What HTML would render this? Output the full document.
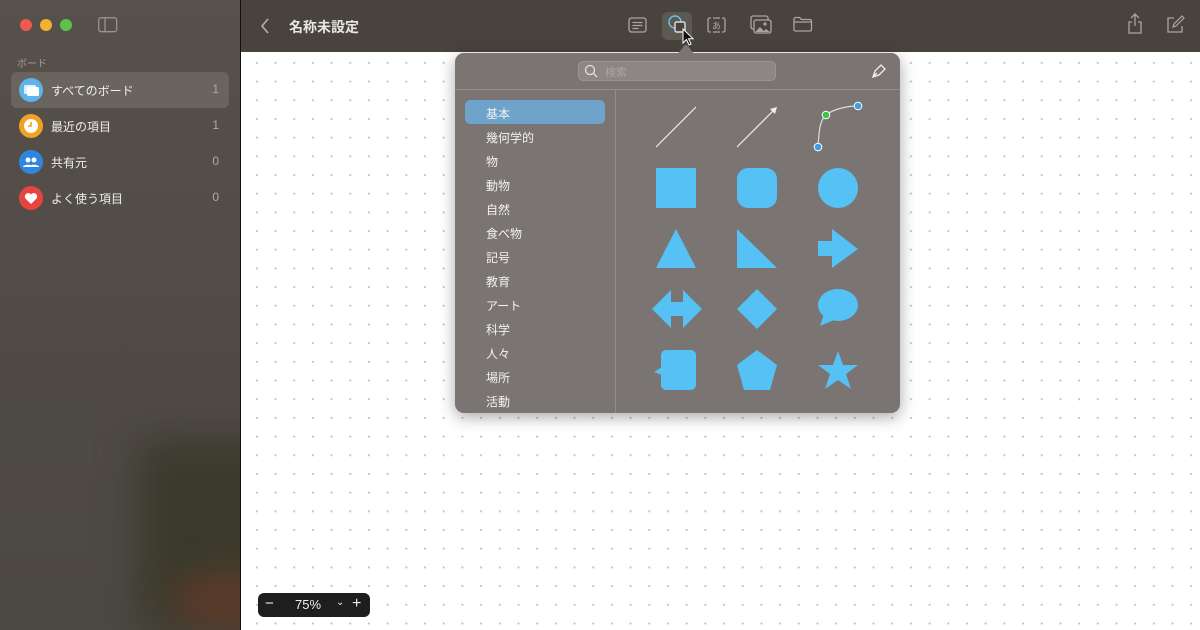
<!DOCTYPE html>
<html style="width:1200px;height:630px;overflow:hidden"><head><meta charset="utf-8"><style>
*{margin:0;padding:0;box-sizing:border-box}
body{width:1200px;height:630px;overflow:hidden;font-family:"Liberation Sans","Noto Sans CJK JP",sans-serif;position:relative;background:#fff}
.sb{position:absolute;left:0;top:0;width:240px;height:630px;background:linear-gradient(180deg,#57514b 0%,#4f4a45 60%,#4c4842 100%);overflow:hidden}
.sb .blob{position:absolute;left:140px;top:440px;width:160px;height:190px;background:#3a3a2c;filter:blur(20px)}
.sb .blob2{position:absolute;left:170px;top:570px;width:120px;height:60px;background:#5a3a2a;filter:blur(16px);border-radius:50%}
.vl{position:absolute;left:240px;top:0;width:1px;height:630px;background:#111}
.tb{position:absolute;left:241px;top:0;width:959px;height:52px;background:#48443d}
.canvas{position:absolute;left:241px;top:52px;width:959px;height:578px;background-color:#fff;background-image:radial-gradient(circle,#c4c4c4 0.9px,transparent 1.3px);background-size:18.7px 18.7px;background-position:6.5px 1.5px}
.dot{position:absolute;top:19px;width:12px;height:12px;border-radius:50%}
.item{position:absolute;left:11px;width:218px;height:36px;border-radius:6px;color:#eee;font-size:12px}
.item .ic{position:absolute;left:8px;top:6px;width:24px;height:24px;border-radius:50%}
.item .t{position:absolute;left:40px;top:10px}
.item .n{position:absolute;right:10px;top:10px;color:#aaa}
.pop{position:absolute;left:455px;top:53px;width:445px;height:360px;background:#7a7572;border-radius:9px;box-shadow:0 4px 16px rgba(0,0,0,.35)}
.cat{position:absolute;left:31px;font-size:12px;color:#f2f2f2}
</style></head><body>
<div class="sb"><div class="blob"></div><div class="blob2"></div>
<div class="dot" style="left:20px;background:#ed5a51"></div>
<div class="dot" style="left:40px;background:#f0b32f"></div>
<div class="dot" style="left:60px;background:#5bc24a"></div>
<svg style="position:absolute;left:98px;top:17px" width="20" height="16"><rect x="0.7" y="0.7" width="18" height="14" rx="2.5" fill="none" stroke="#9a948e" stroke-width="1.3"/><line x1="7" y1="1" x2="7" y2="15" stroke="#9a948e" stroke-width="1.3"/></svg>
<div style="position:absolute;left:17px;top:55px;font-size:10px;color:#a29c96">ボード</div>
<div class="item" style="top:72px;background:#6a645f"><div class="ic" style="background:#5db3ea"><svg width="24" height="24"><rect x="5" y="7" width="12" height="9" rx="1.5" fill="#fff" opacity=".8"/><rect x="8" y="9" width="12" height="9" rx="1.5" fill="#fff"/></svg></div><span class="t">すべてのボード</span><span class="n">1</span></div>
<div class="item" style="top:108px"><div class="ic" style="background:#f0a224"><svg width="24" height="24"><circle cx="12" cy="12" r="7" fill="#fff"/><path d="M12 8v4h-3" stroke="#f0a224" stroke-width="1.6" fill="none"/></svg></div><span class="t">最近の項目</span><span class="n">1</span></div>
<div class="item" style="top:144px"><div class="ic" style="background:#2f86e0"><svg width="24" height="24"><circle cx="9" cy="10" r="2.5" fill="#fff"/><circle cx="15" cy="10" r="2.5" fill="#fff"/><path d="M4 17c0-3 10-3 10 0zM10 17c0-3 10-3 10 0z" fill="#fff"/></svg></div><span class="t">共有元</span><span class="n">0</span></div>
<div class="item" style="top:180px"><div class="ic" style="background:#e8443f"><svg width="24" height="24"><path d="M12 18l-5.5-5.5a3.2 3.2 0 0 1 5.5-4 3.2 3.2 0 0 1 5.5 4z" fill="#fff"/></svg></div><span class="t">よく使う項目</span><span class="n">0</span></div>
</div>
<div class="vl"></div>
<div class="tb">
<svg style="position:absolute;left:18px;top:17px" width="12" height="18"><path d="M9 2L3 9l6 7" stroke="#b5b0aa" stroke-width="1.6" fill="none"/></svg>
<div style="position:absolute;left:48px;top:17px;font-size:14px;font-weight:bold;color:#e8e6e3">名称未設定</div>
<svg style="position:absolute;left:387px;top:17px" width="20" height="17"><rect x="1" y="1" width="17" height="14" rx="2.5" fill="none" stroke="#aaa59f" stroke-width="1.3"/><path d="M4.5 5.5h10M4.5 8.5h10M4.5 11.5h6" stroke="#aaa59f" stroke-width="1.2"/></svg>
<div style="position:absolute;left:421px;top:12px;width:30px;height:28px;border-radius:6px;background:#5c5852"></div>
<svg style="position:absolute;left:426px;top:14px" width="22" height="22"><circle cx="8" cy="8" r="6" fill="none" stroke="#6fc2f0" stroke-width="1.4"/><rect x="8" y="8" width="10" height="10" rx="1.5" fill="#48443d" stroke="#e0e0e0" stroke-width="1.4"/></svg>
<svg style="position:absolute;left:440px;top:28px" width="14" height="20"><path d="M2 1v14l3.5-3.5 2.5 5.5 2-1-2.5-5.3H12z" fill="#111" stroke="#fff" stroke-width="1"/></svg>
<svg style="position:absolute;left:466px;top:17px" width="20" height="17"><path d="M4 1H2.5A1.5 1.5 0 0 0 1 2.5v11A1.5 1.5 0 0 0 2.5 15H4M15 1h1.5A1.5 1.5 0 0 1 18 2.5v11a1.5 1.5 0 0 1-1.5 1.5H15M6 1h7M6 15h7" stroke="#aaa59f" stroke-width="1.3" fill="none"/><text x="9.5" y="12" font-size="9" fill="#aaa59f" text-anchor="middle" font-family="Noto Sans CJK JP">あ</text></svg>
<svg style="position:absolute;left:509px;top:15px" width="22" height="20"><rect x="1" y="1" width="17" height="13" rx="2" fill="none" stroke="#aaa59f" stroke-width="1.3"/><rect x="4" y="5" width="17" height="13" rx="2" fill="#48443d" stroke="#aaa59f" stroke-width="1.3"/><circle cx="15" cy="9" r="1.6" fill="#aaa59f"/><path d="M5 17l5-5 4 4 2-2 4 3z" fill="#aaa59f"/></svg>
<svg style="position:absolute;left:552px;top:16px" width="20" height="17"><path d="M1 3a1.5 1.5 0 0 1 1.5-1.5h4l2 2h8.5A1.5 1.5 0 0 1 18.5 5v8.5A1.5 1.5 0 0 1 17 15H2.5A1.5 1.5 0 0 1 1 13.5zM1 6h17.5" stroke="#aaa59f" stroke-width="1.3" fill="none"/></svg>
<svg style="position:absolute;left:885px;top:13px" width="18" height="22"><path d="M9 1v12M5 5l4-4 4 4M6 9H3v11h12V9h-3" stroke="#aaa59f" stroke-width="1.3" fill="none"/></svg>
<svg style="position:absolute;left:924px;top:15px" width="20" height="20"><path d="M9 3H3v14h14v-6" stroke="#aaa59f" stroke-width="1.3" fill="none"/><path d="M8 12l1-3 8-8 2 2-8 8z" stroke="#aaa59f" stroke-width="1.2" fill="none"/></svg>
</div>
<div class="canvas"></div>
<div style="position:absolute;left:258px;top:593px;width:112px;height:24px;background:#1e1e1e;border-radius:6px;color:#eee;font-size:13px;overflow:hidden">
<span style="position:absolute;left:7px;top:2px;font-size:15px;line-height:18px">−</span>
<span style="position:absolute;left:37px;top:4px;line-height:16px">75%</span>
<span style="position:absolute;left:78px;top:3px;font-size:10px;line-height:14px">⌄</span>
<span style="position:absolute;left:94px;top:2px;font-size:16px;line-height:18px">+</span></div>
<div class="pop">
<svg style="position:absolute;left:218px;top:-8px" width="26" height="10"><path d="M0 10C8 10 9 0 13 0s5 10 13 10z" fill="#7a7572"/></svg>
<div style="position:absolute;left:123px;top:8px;width:198px;height:20px;border-radius:5px;background:#8c8784;border:1px solid #9a9592"></div>
<svg style="position:absolute;left:129px;top:11px" width="14" height="14"><circle cx="6" cy="6" r="4.5" fill="none" stroke="#e0e0e0" stroke-width="1.3"/><path d="M9.5 9.5l3.5 3.5" stroke="#e0e0e0" stroke-width="1.3"/></svg>
<div style="position:absolute;left:150px;top:11px;font-size:11px;color:#aaa6a3">検索</div>
<svg style="position:absolute;left:416px;top:10px" width="16" height="16"><path d="M2 14l2-6 6-6 4 4-6 6z M2 14l4-4" stroke="#eee" stroke-width="1.3" fill="none"/></svg>
<div style="position:absolute;left:0;top:36px;width:445px;height:1px;background:#938e8b"></div>
<div style="position:absolute;left:160px;top:37px;width:1px;height:323px;background:#938e8b"></div>
<div style="position:absolute;left:10px;top:47px;width:140px;height:24px;border-radius:5px;background:#6ea4c9"></div>
<div class="cat" style="top:52px">基本</div>
<div class="cat" style="top:76px">幾何学的</div>
<div class="cat" style="top:100px">物</div>
<div class="cat" style="top:124px">動物</div>
<div class="cat" style="top:148px">自然</div>
<div class="cat" style="top:172px">食べ物</div>
<div class="cat" style="top:196px">記号</div>
<div class="cat" style="top:220px">教育</div>
<div class="cat" style="top:244px">アート</div>
<div class="cat" style="top:268px">科学</div>
<div class="cat" style="top:292px">人々</div>
<div class="cat" style="top:316px">場所</div>
<div class="cat" style="top:340px">活動</div>
<svg style="position:absolute;left:0;top:0" width="445" height="360" viewBox="455 53 445 360">
<g fill="#55c1f5">
<path d="M656 147L696 107M737 147L775 109" stroke="#eee" stroke-width="1.2"/>
<path d="M777 107l-7 2 5 5z" fill="#eee"/>
<path d="M818 147C819 130 820 120 826 115S845 106 858 106" stroke="#ddd" stroke-width="1.2" fill="none"/>
<circle cx="818" cy="147" r="3.8" fill="#3d9ee0" stroke="#fff" stroke-width="1"/>
<circle cx="826" cy="115" r="3.8" fill="#3fc24a" stroke="#fff" stroke-width="1"/>
<circle cx="858" cy="106" r="3.8" fill="#3d9ee0" stroke="#fff" stroke-width="1"/>
<rect x="656" y="168" width="40" height="40"/>
<rect x="737" y="168" width="40" height="40" rx="11"/>
<circle cx="838" cy="188" r="20"/>
<path d="M676 229l20 39h-40z"/>
<path d="M737 229v39h40z"/>
<path d="M818 241h14v-12l26 20-26 19v-12h-14z"/>
<path d="M652 309l19-19v12h12v-12l19 19-19 19v-12h-12v12z"/>
<path d="M757 289l20 20-20 20-20-20z"/>
<ellipse cx="838" cy="305" rx="20" ry="16"/><path d="M820 326l4-12 10 6z"/>
<rect x="661" y="350" width="35" height="40" rx="5"/><path d="M654 372l8-5v8z"/>
<path d="M757 350l20 15-7 25h-26l-7-25z"/>
<path d="M838 351l5 14h15l-12 9 5 15-13-9-13 9 5-15-12-9h15z"/>
</g></svg>
</div>
</body></html>
